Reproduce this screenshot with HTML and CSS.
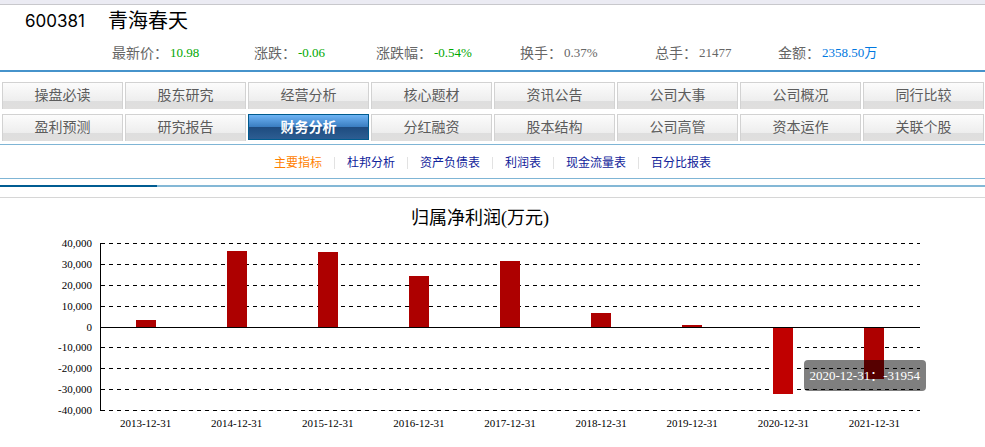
FILE: index.html
```html
<!DOCTYPE html>
<html lang="zh-CN">
<head>
<meta charset="utf-8">
<title>青海春天 600381</title>
<link rel="stylesheet" href="styles.css">
</head>
<body>
<header class="quote">
  <h1 class="stock"><span class="code">600381</span><span>青海春天</span></h1>
  <dl class="stats">
    <div class="stat"><dt>最新价：</dt><dd class="down">10.98</dd></div>
    <div class="stat"><dt>涨跌：</dt><dd class="down">-0.06</dd></div>
    <div class="stat"><dt>涨跌幅：</dt><dd class="down">-0.54%</dd></div>
    <div class="stat"><dt>换手：</dt><dd>0.37%</dd></div>
    <div class="stat"><dt>总手：</dt><dd>21477</dd></div>
    <div class="stat"><dt>金额：</dt><dd class="amount">2358.50万</dd></div>
  </dl>
</header>
<nav class="tabs">
  <a class="tab" href="#">操盘必读</a>
  <a class="tab" href="#">股东研究</a>
  <a class="tab" href="#">经营分析</a>
  <a class="tab" href="#">核心题材</a>
  <a class="tab" href="#">资讯公告</a>
  <a class="tab" href="#">公司大事</a>
  <a class="tab" href="#">公司概况</a>
  <a class="tab" href="#">同行比较</a>
  <a class="tab" href="#">盈利预测</a>
  <a class="tab" href="#">研究报告</a>
  <a class="tab active" href="#">财务分析</a>
  <a class="tab" href="#">分红融资</a>
  <a class="tab" href="#">股本结构</a>
  <a class="tab" href="#">公司高管</a>
  <a class="tab" href="#">资本运作</a>
  <a class="tab" href="#">关联个股</a>
</nav>
<nav class="subnav">
  <a class="current" href="#">主要指标</a>
  <a href="#">杜邦分析</a>
  <a href="#">资产负债表</a>
  <a href="#">利润表</a>
  <a href="#">现金流量表</a>
  <a href="#">百分比报表</a>
</nav>
<div class="rule"><div class="rule-mark"></div></div>
<main class="panel">
  <h2 class="chart-title">归属净利润(万元)</h2>
  <div class="chart">
    <div class="y-axis">
      <span>40,000</span><span>30,000</span><span>20,000</span><span>10,000</span><span>0</span><span>-10,000</span><span>-20,000</span><span>-30,000</span><span>-40,000</span>
    </div>
    <div class="plot">
      <div class="lines">
        <i></i><i></i><i></i><i></i><i class="zero"></i><i></i><i></i><i></i><i></i>
      </div>
      <div class="bars">
        <div class="slot"><div class="bar" style="height:8%"></div></div>
        <div class="slot"><div class="bar" style="height:91%"></div></div>
        <div class="slot"><div class="bar" style="height:89%"></div></div>
        <div class="slot"><div class="bar" style="height:61%"></div></div>
        <div class="slot"><div class="bar" style="height:78%"></div></div>
        <div class="slot"><div class="bar" style="height:17%"></div></div>
        <div class="slot"><div class="bar" style="height:2%"></div></div>
        <div class="slot"><div class="bar negative hover" style="height:80%"></div></div>
        <div class="slot"><div class="bar negative" style="height:62%"></div></div>
      </div>
      <div class="tooltip">2020-12-31：-31954</div>
    </div>
    <div class="x-axis">
      <span>2013-12-31</span><span>2014-12-31</span><span>2015-12-31</span><span>2016-12-31</span><span>2017-12-31</span><span>2018-12-31</span><span>2019-12-31</span><span>2020-12-31</span><span>2021-12-31</span>
    </div>
  </div>
</main>
</body>
</html>
```
FILE: styles.css
```css
* { box-sizing: border-box; }
body {
  margin: 0;
  background: #fff;
  color: #000;
  font-family: "Liberation Serif", "Noto Sans CJK SC", serif;
}
a { text-decoration: none; }
h1, h2, dl, dd { margin: 0; font-weight: normal; }

.quote {
  border-bottom: 2px solid #4693cb;
}
.quote::before {
  content: "";
  display: block;
  height: 4px;
  background: #ebebf3;
  border-bottom: 1px solid #c8c8cc;
}
.stock {
  display: flex;
  align-items: center;
  gap: 23px;
  padding-left: 25px;
  font-size: 20px;
  line-height: 32px;
}
.code { font: 17px/32px Inter, sans-serif; }
.stats {
  display: grid;
  grid-template-columns: 142fr 122fr 144fr 135fr 123fr 207fr;
  padding: 0 0 1px 112px;
  color: #666;
  line-height: 32px;
}
.stat { display: flex; gap: 2px; }
.stat dt { font: 14px/30px "Noto Sans CJK SC", sans-serif; }
.stat dd { font-size: 13px; }
.stat .down { color: #00a800; }
.stat .amount { color: #0078e0; }

.tabs {
  display: grid;
  grid-template-columns: repeat(8, 1fr);
  gap: 5px 2px;
  padding: 10px 1px 3px 2px;
  border-bottom: 1px solid #7fb5d5;
}
.tab {
  height: 27px;
  border: 1px solid #d2d2d2;
  border-bottom: 0;
  background: linear-gradient(#fcfcfc, #ededed 70%, #dedede 71%, #e0dfde);
  color: #5c5c5c;
  font-size: 14px;
  line-height: 25px;
  text-align: center;
}
.tab.active {
  height: 26px;
  border: 1px solid #005b8e;
  background: linear-gradient(#6eb4f5, #3c7fc2 48%, #1e4c80 52%, #2d5d92);
  color: #fff;
  font-weight: bold;
}

.subnav {
  display: flex;
  justify-content: center;
  align-items: center;
  height: 34px;
  padding-top: 2px;
  border-bottom: 1px solid #7fb5d5;
}
.subnav a {
  padding: 0 12px;
  color: #10239a;
  font-size: 12px;
  line-height: 12px;
}
.subnav a + a { border-left: 1px solid #e2e2e2; }
.subnav .current { color: #ff7f00; }

.rule {
  margin: 6px 0 10px;
  background: #84b8d6;
}
.rule-mark { width: 157px; height: 2px; background: #005c92; }

.panel {
  padding: 0 25px 0 0;
}
.panel::before {
  content: "";
  display: block;
  height: 1px;
  margin-right: -25px;
  background: #d6d6d6;
}
.chart-title {
  padding-top: 4px;
  font-size: 18px;
  line-height: 32px;
  text-align: center;
}
.chart {
  display: grid;
  grid-template-columns: 92px 1fr;
  gap: 0 8px;
  padding: 9px 40px 0 0;
  font-size: 11px;
}
.y-axis, .lines {
  display: flex;
  flex-direction: column;
  justify-content: space-between;
}
.y-axis { text-align: right; }
.y-axis span { height: 1px; line-height: 1px; }
.plot {
  position: relative;
  display: grid;
  height: 168px;
}
.lines, .bars { grid-area: 1 / 1; }
.lines { border-left: 1px solid #000; }
.lines i {
  height: 1px;
  background: repeating-linear-gradient(90deg, #000 0 4px, transparent 4px 8px);
}
.lines .zero { background: #000; z-index: 1; }
.bars {
  display: grid;
  grid-template-columns: repeat(9, 1fr);
}
.slot {
  display: grid;
  grid-template-rows: 1fr 1fr;
  justify-content: center;
}
.bar {
  width: 20px;
  grid-row: 1;
  align-self: end;
  background: #ad0000;
}
.bar.negative { grid-row: 2; align-self: start; }
.bar.hover { background: #c00000; }
.tooltip {
  position: absolute;
  right: -6px;
  bottom: 20px;
  padding: 0 6px;
  border-radius: 4px;
  background: rgba(0, 0, 0, 0.5);
  color: #fff;
  font-size: 13px;
  line-height: 31px;
  white-space: nowrap;
}
.x-axis {
  grid-column: 2;
  display: grid;
  grid-template-columns: repeat(9, 1fr);
  line-height: 24px;
  text-align: center;
}
```
